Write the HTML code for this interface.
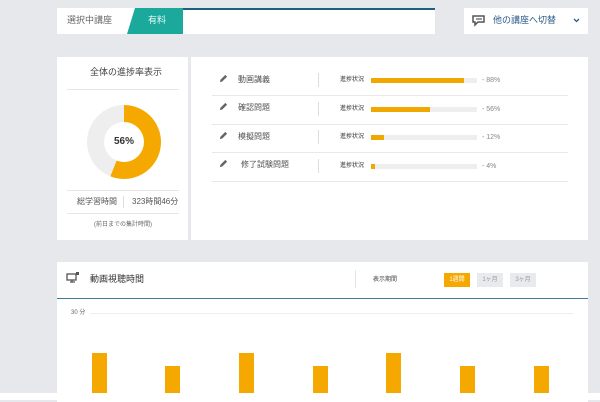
<!DOCTYPE html><html><head><meta charset="utf-8"><style>
*{margin:0;padding:0;box-sizing:border-box}
body{width:600px;height:400px;background:#e6e8eb;font-family:"Liberation Sans","Noto Sans CJK JP",sans-serif;position:relative;overflow:hidden;color:#444}
.a{position:absolute}
.w{background:#fff}
.t{font-size:8px;color:#555;white-space:nowrap;line-height:1}
</style></head><body>
<svg width="0" height="0" style="position:absolute"><defs><symbol id="pen" viewBox="0 0 10 10"><path d="M1 9l0.6-2.6L7 1l2 2-5.4 5.4z" fill="#666"/></symbol></defs></svg>
<div class="a w" style="left:57px;top:8px;width:126px;height:26px"></div>
<div class="a t" style="left:67px;top:16px;font-size:9px;color:#666">選択中講座</div>
<div class="a" style="left:127px;top:8px;width:56px;height:26px;background:#1aa99b;clip-path:polygon(8px 0,100% 0,100% 100%,0 100%)"></div>
<div class="a t" style="left:148px;top:16px;font-size:9px;color:#e8fbf8">有料</div>
<div class="a w" style="left:183px;top:8px;width:252px;height:26px;border-top:2px solid #1f5f84"></div>
<div class="a w" style="left:464px;top:8px;width:124px;height:26px"></div>
<svg class="a" style="left:472px;top:15px" width="14" height="12" viewBox="0 0 14 12"><path d="M1 1h11v6H6l-3 3V7H1z" fill="none" stroke="#555" stroke-width="1.5"/><path d="M4 4h6" stroke="#555" stroke-width="1.2"/></svg>
<div class="a t" style="left:493px;top:16px;font-size:9px;color:#2a5a85">他の講座へ切替</div>
<svg class="a" style="left:573px;top:18px" width="7" height="5" viewBox="0 0 7 5"><path d="M1 1l2.5 2.5L6 1" fill="none" stroke="#2a5a85" stroke-width="1.3"/></svg>

<div class="a w" style="left:57px;top:57px;width:131px;height:183px"></div>
<div class="a t" style="left:90px;top:68px;font-size:9px;color:#444">全体の進捗率表示</div>
<div class="a" style="left:67px;top:89px;width:112px;height:1px;background:#e6e6e6"></div>
<div class="a" style="left:87px;top:105px;width:74px;height:74px;border-radius:50%;background:conic-gradient(#f5a800 0 56%,#eeeeee 56% 100%)"></div>
<div class="a w" style="left:104px;top:122px;width:40px;height:40px;border-radius:50%"></div>
<div class="a" style="left:104px;top:137px;width:40px;text-align:center;font-size:10px;line-height:1;font-weight:bold;color:#333">56%</div>
<div class="a" style="left:67px;top:190px;width:112px;height:1px;background:#e6e6e6"></div>
<div class="a t" style="left:77px;top:198px">総学習時間</div>
<div class="a" style="left:123px;top:196px;width:1px;height:12px;background:#ddd"></div>
<div class="a t" style="left:132px;top:198px">323時間46分</div>
<div class="a" style="left:67px;top:213px;width:112px;height:1px;background:#e6e6e6"></div>
<div class="a t" style="left:94px;top:222px;font-size:6px;color:#666">(前日までの集計時間)</div>

<div class="a w" style="left:191px;top:57px;width:397px;height:183px"></div>
<div class="a" style="left:212px;top:95px;width:356px;height:1px;background:#e8e8e8"></div>
<div class="a" style="left:212px;top:124px;width:356px;height:1px;background:#e8e8e8"></div>
<div class="a" style="left:212px;top:152px;width:356px;height:1px;background:#e8e8e8"></div>
<div class="a" style="left:212px;top:181px;width:356px;height:1px;background:#e8e8e8"></div>

<svg class="a" style="left:219px;top:74px" width="9" height="9"><use href="#pen"/></svg><div class="a t" style="left:238px;top:76px">動画講義</div>
<svg class="a" style="left:219px;top:102px" width="9" height="9"><use href="#pen"/></svg><div class="a t" style="left:238px;top:104px">確認問題</div>
<svg class="a" style="left:219px;top:131px" width="9" height="9"><use href="#pen"/></svg><div class="a t" style="left:238px;top:133px">模擬問題</div>
<svg class="a" style="left:219px;top:159px" width="9" height="9"><use href="#pen"/></svg><div class="a t" style="left:241px;top:161px">修了試験問題</div>

<div class="a" style="left:318px;top:73px;width:1px;height:14px;background:#ddd"></div>
<div class="a" style="left:318px;top:102px;width:1px;height:14px;background:#ddd"></div>
<div class="a" style="left:318px;top:130px;width:1px;height:14px;background:#ddd"></div>
<div class="a" style="left:318px;top:159px;width:1px;height:14px;background:#ddd"></div>

<div class="a t" style="left:340px;top:77px;font-size:6px;color:#333">進捗状況</div>
<div class="a" style="left:371px;top:78px;width:106px;height:5px;background:#eee"><div style="width:88%;height:100%;background:#f0a800"></div></div>
<div class="a t" style="left:482px;top:77px;font-size:7px;color:#888">- 88%</div>
<div class="a t" style="left:340px;top:106px;font-size:6px;color:#333">進捗状況</div>
<div class="a" style="left:371px;top:107px;width:106px;height:5px;background:#eee"><div style="width:56%;height:100%;background:#f0a800"></div></div>
<div class="a t" style="left:482px;top:106px;font-size:7px;color:#888">- 56%</div>
<div class="a t" style="left:340px;top:134px;font-size:6px;color:#333">進捗状況</div>
<div class="a" style="left:371px;top:135px;width:106px;height:5px;background:#eee"><div style="width:12%;height:100%;background:#f0a800"></div></div>
<div class="a t" style="left:482px;top:134px;font-size:7px;color:#888">- 12%</div>
<div class="a t" style="left:340px;top:163px;font-size:6px;color:#333">進捗状況</div>
<div class="a" style="left:371px;top:164px;width:106px;height:5px;background:#eee"><div style="width:4%;height:100%;background:#f0a800"></div></div>
<div class="a t" style="left:482px;top:163px;font-size:7px;color:#888">- 4%</div>

<div class="a w" style="left:57px;top:262px;width:531px;height:140px"></div>
<div class="a" style="left:57px;top:298px;width:531px;height:1px;background:#3f7d96"></div>
<div class="a" style="left:0;top:393px;width:600px;height:7px;background:#fff"></div>
<svg class="a" style="left:66px;top:272px" width="14" height="12" viewBox="0 0 14 12"><rect x="1" y="2" width="9" height="6" fill="none" stroke="#555" stroke-width="1.3"/><path d="M4 10h5M6 8v2" stroke="#555" stroke-width="1.3"/><rect x="10" y="0" width="3" height="3" fill="#555"/></svg>
<div class="a t" style="left:90px;top:275px;font-size:9px;color:#333">動画視聴時間</div>
<div class="a" style="left:355px;top:270px;width:1px;height:18px;background:#e6e6e6"></div>
<div class="a t" style="left:373px;top:277px;font-size:6px;color:#444">表示期間</div>
<div class="a" style="left:444px;top:273px;width:26px;height:14px;background:#f5a800;color:#fff;font-size:6px;text-align:center;line-height:14px">1週間</div>
<div class="a" style="left:477px;top:273px;width:26px;height:14px;background:#e8eaed;color:#999;font-size:6px;text-align:center;line-height:14px">1ヶ月</div>
<div class="a" style="left:510px;top:273px;width:26px;height:14px;background:#e8eaed;color:#999;font-size:6px;text-align:center;line-height:14px">3ヶ月</div>
<div class="a t" style="left:71px;top:310px;font-size:6px;color:#666">30 分</div>
<div class="a" style="left:90px;top:313px;width:483px;height:1px;background:#eee"></div>
<div class="a" style="left:92px;top:353px;width:15px;height:40px;background:#f5a800"></div>
<div class="a" style="left:165px;top:366px;width:15px;height:27px;background:#f5a800"></div>
<div class="a" style="left:239px;top:353px;width:15px;height:40px;background:#f5a800"></div>
<div class="a" style="left:313px;top:366px;width:15px;height:27px;background:#f5a800"></div>
<div class="a" style="left:386px;top:353px;width:15px;height:40px;background:#f5a800"></div>
<div class="a" style="left:460px;top:366px;width:15px;height:27px;background:#f5a800"></div>
<div class="a" style="left:534px;top:366px;width:15px;height:27px;background:#f5a800"></div>
</body></html>
